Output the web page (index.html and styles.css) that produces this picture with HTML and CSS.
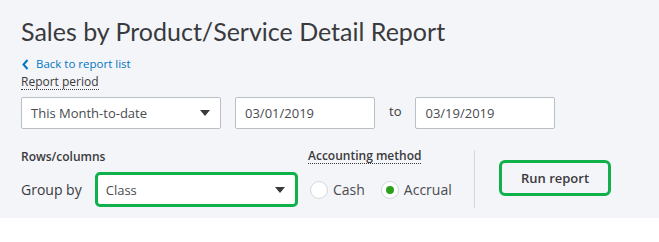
FILE: index.html
```html
<!DOCTYPE html>
<html>
<head>
<meta charset="utf-8">
<link rel="stylesheet" href="styles.css">
</head>
<body>
<div class="panel">
  <h1 class="title">Sales by Product/Service Detail Report</h1>
  <a class="back" href="#"><svg class="chev" width="7" height="11" viewBox="0 0 7 11"><path d="M5.5 1 L1.5 5.5 L5.5 10" fill="none" stroke="#0077c5" stroke-width="2"/></svg>Back to report list</a>
  <div class="label dotted period-label">Report period</div>
  <div class="period-row">
    <div class="select period-select"><span>This Month-to-date</span><span class="caret"></span></div>
    <div class="input date first">03/01/2019</div>
    <div class="to">to</div>
    <div class="input date">03/19/2019</div>
  </div>
  <div class="options-row">
    <div class="rows-group">
      <div class="label bold">Rows/columns</div>
      <div class="group-line">
        <span class="group-label">Group by</span>
        <div class="select class-select"><span>Class</span><span class="caret"></span></div>
      </div>
    </div>
    <div class="method-group">
      <div class="label dotted bold">Accounting method</div>
      <div class="radios">
        <span class="radio"></span><span class="radio-text">Cash</span>
        <span class="radio checked"></span><span class="radio-text">Accrual</span>
      </div>
    </div>
    <div class="divider"></div>
    <div class="run-wrap"><button class="run">Run report</button></div>
  </div>
</div>
</body>
</html>
```
FILE: styles.css
```css
html, body { margin: 0; padding: 0; background: #fff; }
body { font-family: "Open Sans", "Noto Sans", sans-serif; color: #393a3d; }
.panel {
  background: #f4f5f8;
  height: 218px;
  box-sizing: border-box;
  padding: 13px 0 0 21px;
}
.title {
  margin: 0;
  font-family: Lato, "Open Sans", sans-serif;
  font-weight: 400;
  font-size: 25px;
  line-height: 36px;
  color: #393a3d;
  letter-spacing: 0;
}
.back {
  display: flex;
  align-items: center;
  gap: 7px;
  margin-top: 7px;
  font-size: 11.5px;
  line-height: 16px;
  color: #0077c5;
  text-decoration: none;
}
.chev { margin-left: 1px; }
.label {
  font-size: 12px;
  line-height: 16px;
  color: #393a3d;
}
.dotted {
  display: block;
  width: max-content;
  border-bottom: 1px dotted #393a3d;
  line-height: 14px;
}
.period-label { margin-top: 3px; }
.bold { font-weight: 600; }
.period-row {
  display: flex;
  align-items: center;
  margin-top: 7px;
  height: 32px;
}
.select, .input {
  box-sizing: border-box;
  height: 32px;
  background: #fff;
  border: 1px solid #babec5;
  border-radius: 2px;
  font-size: 13px;
  color: #4a4b50;
  display: flex;
  align-items: center;
}
.period-select {
  width: 200px;
  padding: 0 10px 0 9px;
  justify-content: space-between;
}
.caret {
  width: 0; height: 0;
  border-left: 5px solid transparent;
  border-right: 5px solid transparent;
  border-top: 6px solid #393a3d;
}
.date { width: 140px; padding-left: 9px; }
.date.first { margin-left: 14px; }
.to { font-size: 13px; margin: 0 14px; padding-bottom: 4px; }
.options-row {
  display: flex;
  margin-top: 20px;
}
.rows-group { width: 287px; }
.group-line {
  display: flex;
  align-items: center;
  margin-top: 7px;
}
.group-label { font-size: 14px; margin-right: 13px; }
.class-select {
  width: 203px;
  height: 35px;
  border: 3px solid #10b04b;
  border-radius: 5px;
  padding: 0 10px 0 8px;
  justify-content: space-between;
}
.method-group { width: 166px; }
.radios {
  display: flex;
  align-items: center;
  margin-top: 16px;
}
.radio {
  box-sizing: border-box;
  width: 18px; height: 18px;
  border-radius: 50%;
  background: #fff;
  border: 1px solid #d4d7dc;
  margin-left: 2px;
  position: relative;
}
.radio.checked::after {
  content: "";
  position: absolute;
  left: 4px; top: 4px;
  width: 8px; height: 8px;
  border-radius: 50%;
  background: #2ca01c;
}
.radio-text { font-size: 14px; margin: 0 14px 0 5px; color: #4a4b50; }
.divider {
  width: 1px;
  height: 58px;
  background: #d4d7dc;
  margin-top: 1px;
}
.run-wrap { padding-left: 24px; padding-top: 11px; }
.run {
  box-sizing: border-box;
  width: 112px;
  height: 36px;
  border: 3px solid #10b04b;
  border-radius: 6px;
  background: #f4f5f8;
  font-family: "Open Sans", "Noto Sans", sans-serif;
  font-size: 13px;
  font-weight: 600;
  color: #393a3d;
}
```
